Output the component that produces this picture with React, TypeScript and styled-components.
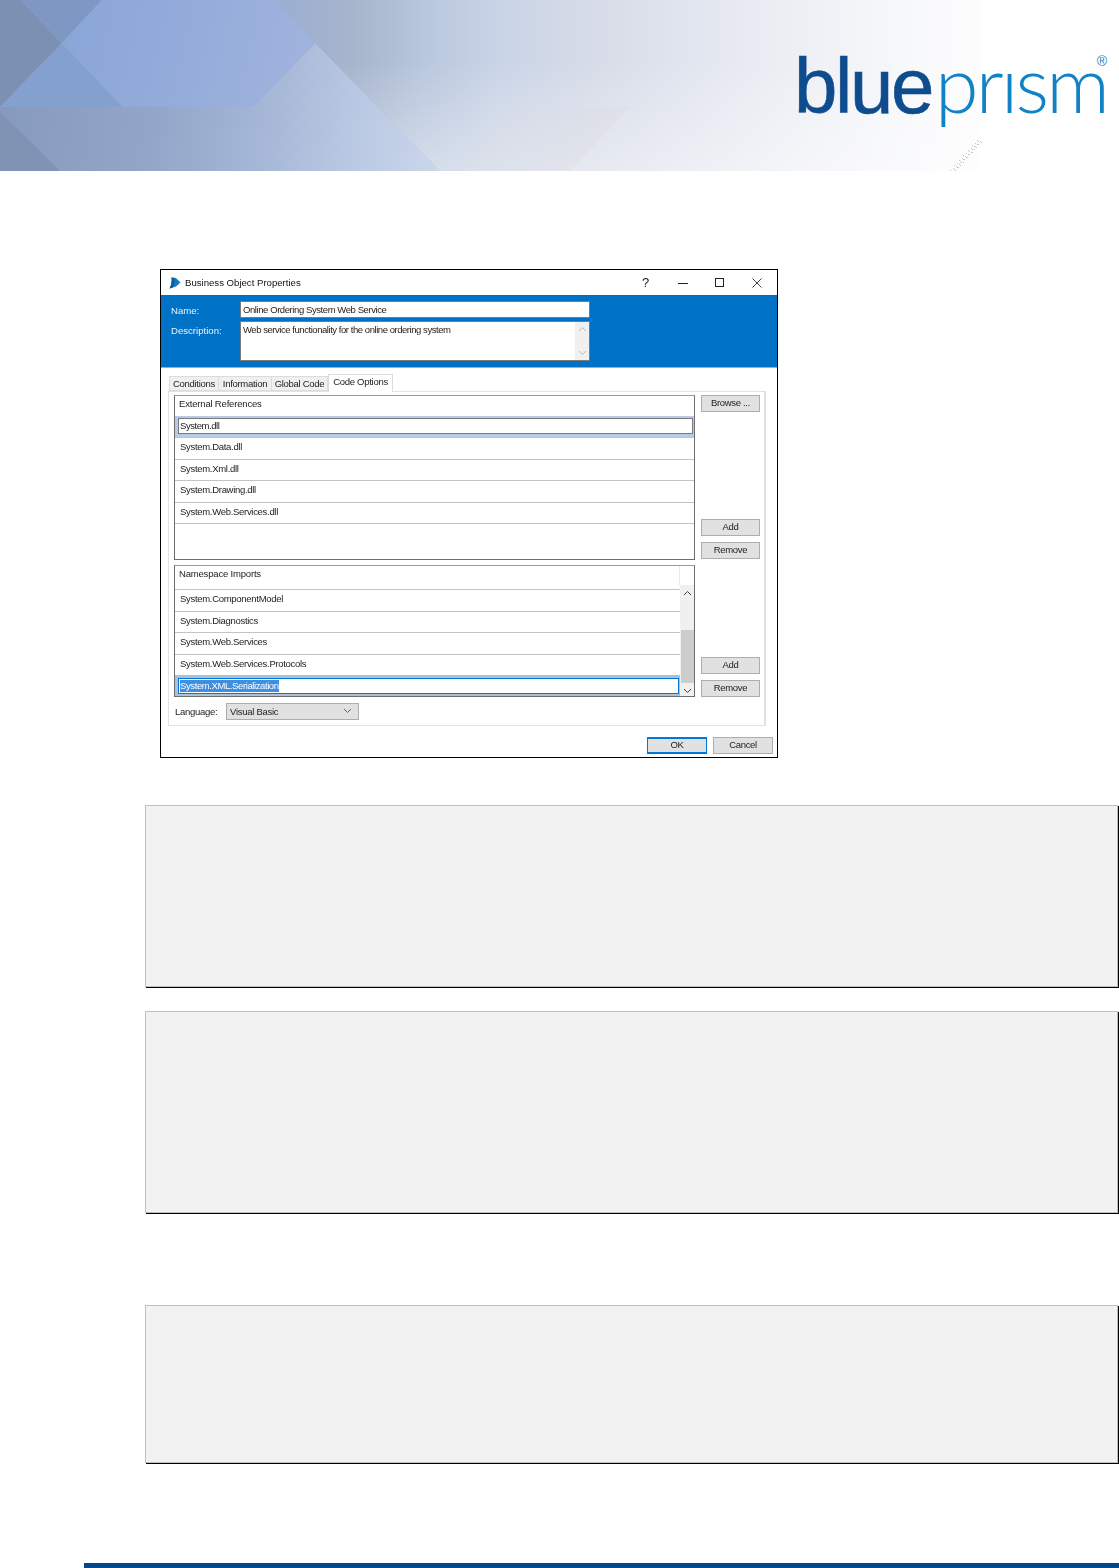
import React from "react";
import styled, { createGlobalStyle } from "styled-components";

const Global = createGlobalStyle`
  html, body { margin: 0; padding: 0; background: #fff; }
  body { font-family: "Liberation Sans", Arial, sans-serif; }
`;

const Page = styled.div`
  width: 1119px;
  height: 1568px;
  overflow: hidden;
  background: #fff;
`;

const Banner = styled.header`
  position: relative;
  height: 171px;
  width: 1119px;
  display: flex;
  justify-content: flex-end;
  align-items: flex-start;
`;

const BannerArt = styled.svg`
  position: absolute;
  left: 0;
  top: 0;
`;

const Logo = styled.div`
  position: relative;
  width: 325px;
  margin: 35px 0 0 0;
  font-family: "Liberation Sans", Arial, sans-serif;
  font-size: 78px;
  line-height: 96px;
  white-space: nowrap;
  display: flex;
  align-items: baseline;
`;

const LogoBlue = styled.span`
  color: #0f4c8e;
  letter-spacing: -2.4px;
  -webkit-text-stroke: 0.6px #0f4c8e;
`;

const LogoPrism = styled.span`
  color: #1282c6;
  font-family: Lato, "Liberation Sans", sans-serif;
  font-weight: 300;
  font-size: 79px;
  letter-spacing: -2.8px;
  margin-left: 3px;
`;

const LogoMark = styled.span`
  position: absolute;
  right: 12px;
  top: 18px;
  font-size: 14px;
  line-height: 16px;
  letter-spacing: 0;
  color: #1282c6;
`;

const Dialog = styled.section`
  box-sizing: border-box;
  width: 618px;
  height: 489px;
  margin: 98px 0 0 160px;
  border: 1px solid #000;
  background: #fff;
  font-size: 9.5px;
  letter-spacing: -0.28px;
  color: #222;
  filter: blur(0.3px);
`;

const TitleBar = styled.div`
  height: 25px;
  display: flex;
  align-items: center;
  padding: 0 2px 0 8px;
`;

const TitleText = styled.span`
  margin-left: 4px;
  flex: 1;
  font-size: 9.6px;
  letter-spacing: 0;
  color: #111;
`;

const WinButton = styled.span`
  width: 37px;
  display: flex;
  justify-content: center;
  align-items: center;
  font-size: 13px;
  color: #222;
`;

const HeaderBand = styled.div`
  box-sizing: border-box;
  height: 73px;
  background: #0072c6;
  border-bottom: 1px solid #7fb6e2;
  padding: 6px 0 0 10px;
  display: grid;
  grid-template-columns: 69px 350px;
  grid-template-rows: 17px 40px;
  row-gap: 3px;
`;

const BandLabel = styled.label`
  color: #e8f2fa;
  font-size: 9.6px;
  letter-spacing: 0;
  padding-top: 4px;
`;

const NameInput = styled.div`
  box-sizing: border-box;
  border: 1px solid #7a7a7a;
  background: #fff;
  padding: 2px 2px;
  line-height: 12px;
  letter-spacing: -0.42px;
  white-space: nowrap;
`;

const DescInput = styled(NameInput)`
  display: flex;
  justify-content: space-between;
  padding: 0 0 0 2px;
  letter-spacing: -0.45px;
`;

const DescText = styled.span`
  padding-top: 2px;
`;

const DescScroll = styled.div`
  width: 14px;
  background: #f0f0f0;
  display: flex;
  flex-direction: column;
  justify-content: space-between;
  align-items: center;
  padding: 4px 0;
`;

const Body = styled.div`
  padding: 6px 4px 0 7px;
`;

const Tabs = styled.div`
  display: flex;
  align-items: flex-end;
  height: 17px;
  padding-left: 1px;
`;

const Tab = styled.div<{ $active?: boolean; $w: number }>`
  box-sizing: border-box;
  width: ${(p) => p.$w}px;
  height: ${(p) => (p.$active ? "18px" : "15px")};
  padding-top: 1px;
  text-align: center;
  background: ${(p) => (p.$active ? "#fff" : "#f0f0f0")};
  border: 1px solid #dcdcdc;
  border-left-width: ${(p) => (p.$active ? "1px" : "0")};
  border-bottom: ${(p) => (p.$active ? "none" : "1px solid #dcdcdc")};
  color: #222;
  line-height: 12px;
  white-space: nowrap;
  margin-bottom: ${(p) => (p.$active ? "-1px" : "0")};
  position: relative;
  &:first-child {
    border-left-width: 1px;
  }
`;

const TabPanel = styled.div`
  box-sizing: border-box;
  width: 598px;
  height: 335px;
  border: 1px solid #e2e2e2;
  border-right-width: 2px;
  padding: 3px 5px 0 5px;
`;

const RefGroup = styled.div<{ $gap?: number }>`
  display: grid;
  grid-template-columns: 521px 59px;
  column-gap: 6px;
  margin-bottom: ${(p) => p.$gap ?? 0}px;
`;

const ListBox = styled.div<{ $h: number }>`
  box-sizing: border-box;
  position: relative;
  height: ${(p) => p.$h}px;
  border: 1px solid #6d6d6d;
  border-top-color: #9a9a9a;
  overflow: hidden;
`;

const ListHeader = styled.div<{ $h: number }>`
  box-sizing: border-box;
  height: ${(p) => p.$h}px;
  padding: 2px 4px 0;
  line-height: 12px;
  letter-spacing: -0.18px;
`;

const ListRow = styled.div<{ $scroll?: boolean }>`
  box-sizing: border-box;
  height: 21.5px;
  border-top: 1px solid #c4c4c4;
  padding: 3px 5px 0;
  line-height: 12px;
  white-space: nowrap;
  letter-spacing: -0.3px;
  margin-right: ${(p) => (p.$scroll ? "14px" : "0")};
`;

const SelectedRow = styled.div<{ $scroll?: boolean; $dark?: boolean; $h: number }>`
  box-sizing: border-box;
  height: ${(p) => p.$h}px;
  background: ${(p) => (p.$dark ? "#aebfd8" : "#b8cbe6")};
  padding: ${(p) => (p.$dark ? "3px 1px 0 3px" : "2px 1px 0 3px")};
  margin-right: ${(p) => (p.$scroll ? "14px" : "0")};
`;

const EditBox = styled.div<{ $focus?: boolean }>`
  box-sizing: border-box;
  height: 16px;
  background: #fff;
  border: 1px solid ${(p) => (p.$focus ? "#0078d7" : "#7a7a7a")};
  padding: 1px 1px;
  line-height: 12px;
  letter-spacing: -0.45px;
`;

const Highlight = styled.span`
  background: #3f8fe0;
  color: #fff;
  display: inline-block;
  height: 12px;
  letter-spacing: -0.4px;
`;

const Scrollbar = styled.div`
  position: absolute;
  right: 0;
  top: 19px;
  bottom: 0;
  width: 14px;
  background: #f0f0f0;
  display: flex;
  flex-direction: column;
  align-items: center;
`;

const ScrollCap = styled.div`
  height: 16px;
  width: 14px;
  display: flex;
  align-items: center;
  justify-content: center;
  flex: none;
`;

const ScrollThumb = styled.div`
  width: 13px;
  height: 53px;
  margin-top: 29px;
  background: #cdcdcd;
  flex: none;
`;

const HeaderDivider = styled.div`
  position: absolute;
  right: 14px;
  top: 0;
  height: 19px;
  width: 1px;
  background: #e8e8e8;
`;

const ButtonColumn = styled.div<{ $pb?: number }>`
  display: flex;
  flex-direction: column;
  gap: 6px;
  padding-bottom: ${(p) => p.$pb ?? 0}px;
`;

const PushDown = styled.div`
  flex: 1;
`;

const WinBtn = styled.button<{ $primary?: boolean; $w?: number }>`
  box-sizing: border-box;
  width: ${(p) => p.$w ?? 59}px;
  height: 17px;
  padding: 0 0 1px;
  background: #e1e1e1;
  border: 1px solid ${(p) => (p.$primary ? "#0078d7" : "#adadad")};
  ${(p) => (p.$primary ? "border-width: 2px 1px;" : "")}
  font: 9.5px "Liberation Sans", Arial, sans-serif;
  letter-spacing: -0.32px;
  color: #222;
  line-height: 12px;
`;

const LanguageRow = styled.div`
  display: flex;
  align-items: center;
  margin-top: 6px;
`;

const LanguageLabel = styled.span`
  width: 51px;
  padding: 0 0 1px 1px;
`;

const SelectBox = styled.div`
  box-sizing: border-box;
  width: 133px;
  height: 17px;
  background: #e1e1e1;
  border: 1px solid #adadad;
  display: flex;
  align-items: center;
  justify-content: space-between;
  padding: 0 6px 1px 3px;
`;

const DialogFooter = styled.div`
  display: flex;
  justify-content: flex-end;
  gap: 6px;
  padding-top: 11px;
`;

const CodeBlock = styled.div<{ $h: number; $mt: number }>`
  box-sizing: border-box;
  width: 973px;
  height: ${(p) => p.$h}px;
  margin: ${(p) => p.$mt}px 0 0 145px;
  background: #f2f2f2;
  border: 1px solid #bfbfbf;
  box-shadow: 1px 1px 0 #000;
`;

const FooterBar = styled.div`
  height: 5px;
  margin: 100px 0 0 84px;
  background: #004a8c;
`;

const Chevron = ({ up, color = "#555" }: { up?: boolean; color?: string }) => (
  <svg width="9" height="6" viewBox="0 0 9 6">
    <path d={up ? "M1 5 L4.5 1.5 L8 5" : "M1 1 L4.5 4.5 L8 1"} fill="none" stroke={color} strokeWidth="1" />
  </svg>
);

const speckle: [number, number][] = Array.from({ length: 44 }, (_, i) => {
  const t = i / 43;
  const wobble = ((i * 37) % 7) - 3;
  return [Math.round(980 - t * 28 + wobble), Math.round(140 + t * 31)] as [number, number];
});

const BannerDrawing = () => (
  <BannerArt width="1119" height="171" viewBox="0 0 1119 171">
    <defs>
      <linearGradient id="base" gradientUnits="userSpaceOnUse" x1="0" y1="0" x2="981" y2="0">
        <stop offset="0.26" stopColor="#9cafd2" />
        <stop offset="0.3" stopColor="#9eb0d1" />
        <stop offset="0.36" stopColor="#a6b4cc" />
        <stop offset="0.43" stopColor="#b8c6dc" />
        <stop offset="0.51" stopColor="#c9d4e6" />
        <stop offset="0.61" stopColor="#d7dce8" />
        <stop offset="0.69" stopColor="#e0e4ee" />
        <stop offset="0.82" stopColor="#eef0f5" />
        <stop offset="0.92" stopColor="#f7f8fb" />
        <stop offset="1" stopColor="#fdfdfe" />
      </linearGradient>
      <linearGradient id="fade" gradientUnits="userSpaceOnUse" x1="0" y1="60" x2="0" y2="171">
        <stop offset="0" stopColor="#fff" stopOpacity="0" />
        <stop offset="1" stopColor="#fff" stopOpacity="0.4" />
      </linearGradient>
      <linearGradient id="hex" gradientUnits="userSpaceOnUse" x1="62" y1="0" x2="315" y2="60">
        <stop offset="0" stopColor="#89a5d8" />
        <stop offset="1" stopColor="#a0b3dd" />
      </linearGradient>
      <linearGradient id="low" gradientUnits="userSpaceOnUse" x1="0" y1="107" x2="440" y2="171">
        <stop offset="0" stopColor="#869abe" />
        <stop offset="0.35" stopColor="#93a6c9" />
        <stop offset="0.6" stopColor="#a6b7d7" />
        <stop offset="0.8" stopColor="#bac9e3" />
        <stop offset="1" stopColor="#cad6ea" />
      </linearGradient>
    </defs>
    <rect x="0" y="0" width="981" height="171" fill="url(#base)" />
    <polygon points="332,60 981,60 981,171 440,171" fill="url(#fade)" />
    <polygon points="0,0 20,0 62,43 0,107" fill="#7b90b2" />
    <polygon points="20,0 102,0 62,43" fill="#7f98c3" />
    <polygon points="315,43 440,171 0,171 0,107 253,107" fill="url(#low)" />
    <polygon points="0,112 60,171 0,171" fill="#8093b5" />
    <polygon points="62,43 123,107 0,107" fill="#84a0cf" />
    <polygon points="102,0 275,0 315,43 253,107 123,107 62,43" fill="url(#hex)" />
    <polygon points="500,107 630,107 570,171 450,171" fill="#dcdbe2" opacity="0.3" />
    {speckle.map(([x, y], i) => (
      <rect key={i} x={x} y={y} width="1" height="1" fill="#c4c7ce" />
    ))}
  </BannerArt>
);

const AppIcon = () => (
  <svg width="12" height="12" viewBox="0 0 12 12">
    <path d="M2.5 0.5 L7 1 L11.5 5.5 L7 9.5 L0.5 11.5 C2.5 8 3 4 2.5 0.5 Z" fill="#0f7cc4" />
    <path d="M2.5 0.5 L5 0.8 C5.8 4 5.2 8 4 10.4 L0.5 11.5 C2.5 8 3 4 2.5 0.5 Z" fill="#135b99" />
  </svg>
);

const extRefs = ["System.Data.dll", "System.Xml.dll", "System.Drawing.dll", "System.Web.Services.dll"];
const nsRefs = ["System.ComponentModel", "System.Diagnostics", "System.Web.Services", "System.Web.Services.Protocols"];

export default function App() {
  return (
    <Page>
      <Global />
      <Banner>
        <BannerDrawing />
        <Logo>
          <LogoBlue>blue</LogoBlue>
          <LogoPrism>prısm</LogoPrism>
          <LogoMark>®</LogoMark>
        </Logo>
      </Banner>

      <Dialog>
        <TitleBar>
          <AppIcon />
          <TitleText>Business Object Properties</TitleText>
          <WinButton>?</WinButton>
          <WinButton>
            <svg width="10" height="10" viewBox="0 0 10 10"><path d="M0 5.5 H10" stroke="#222" /></svg>
          </WinButton>
          <WinButton>
            <svg width="10" height="10" viewBox="0 0 10 10"><rect x="0.5" y="0.5" width="8" height="8" fill="none" stroke="#222" /></svg>
          </WinButton>
          <WinButton>
            <svg width="10" height="10" viewBox="0 0 10 10"><path d="M0.5 0.5 L9.5 9.5 M9.5 0.5 L0.5 9.5" stroke="#444" /></svg>
          </WinButton>
        </TitleBar>

        <HeaderBand>
          <BandLabel>Name:</BandLabel>
          <NameInput>Online Ordering System Web Service</NameInput>
          <BandLabel>Description:</BandLabel>
          <DescInput>
            <DescText>Web service functionality for the online ordering system</DescText>
            <DescScroll>
              <Chevron up color="#b5b5b5" />
              <Chevron color="#b5b5b5" />
            </DescScroll>
          </DescInput>
        </HeaderBand>

        <Body>
          <Tabs>
            <Tab $w={50}>Conditions</Tab>
            <Tab $w={53}>Information</Tab>
            <Tab $w={56}>Global Code</Tab>
            <Tab $active $w={65}>Code Options</Tab>
          </Tabs>
          <TabPanel>
            <RefGroup $gap={5}>
              <ListBox $h={165}>
                <ListHeader $h={20}>External References</ListHeader>
                <SelectedRow $h={21}>
                  <EditBox>System.dll</EditBox>
                </SelectedRow>
                {extRefs.map((r) => (
                  <ListRow key={r}>{r}</ListRow>
                ))}
                <ListRow />
              </ListBox>
              <ButtonColumn $pb={1}>
                <WinBtn>Browse ...</WinBtn>
                <PushDown />
                <WinBtn>Add</WinBtn>
                <WinBtn>Remove</WinBtn>
              </ButtonColumn>
            </RefGroup>

            <RefGroup>
              <ListBox $h={132}>
                <ListHeader $h={23}>Namespace Imports</ListHeader>
                <HeaderDivider />
                {nsRefs.map((r) => (
                  <ListRow key={r} $scroll>{r}</ListRow>
                ))}
                <SelectedRow $scroll $dark $h={21.5}>
                  <EditBox $focus><Highlight>System.XML.Serialization</Highlight></EditBox>
                </SelectedRow>
                <Scrollbar>
                  <ScrollCap><Chevron up color="#444" /></ScrollCap>
                  <ScrollThumb />
                  <ScrollCap><Chevron color="#444" /></ScrollCap>
                </Scrollbar>
              </ListBox>
              <ButtonColumn>
                <PushDown />
                <WinBtn>Add</WinBtn>
                <WinBtn>Remove</WinBtn>
              </ButtonColumn>
            </RefGroup>

            <LanguageRow>
              <LanguageLabel>Language:</LanguageLabel>
              <SelectBox>
                Visual Basic
                <Chevron color="#666" />
              </SelectBox>
            </LanguageRow>
          </TabPanel>
          <DialogFooter>
            <WinBtn $primary $w={60}>OK</WinBtn>
            <WinBtn $w={60}>Cancel</WinBtn>
          </DialogFooter>
        </Body>
      </Dialog>

      <CodeBlock $h={182} $mt={47} />
      <CodeBlock $h={202} $mt={24} />
      <CodeBlock $h={158} $mt={92} />
      <FooterBar />
    </Page>
  );
}
